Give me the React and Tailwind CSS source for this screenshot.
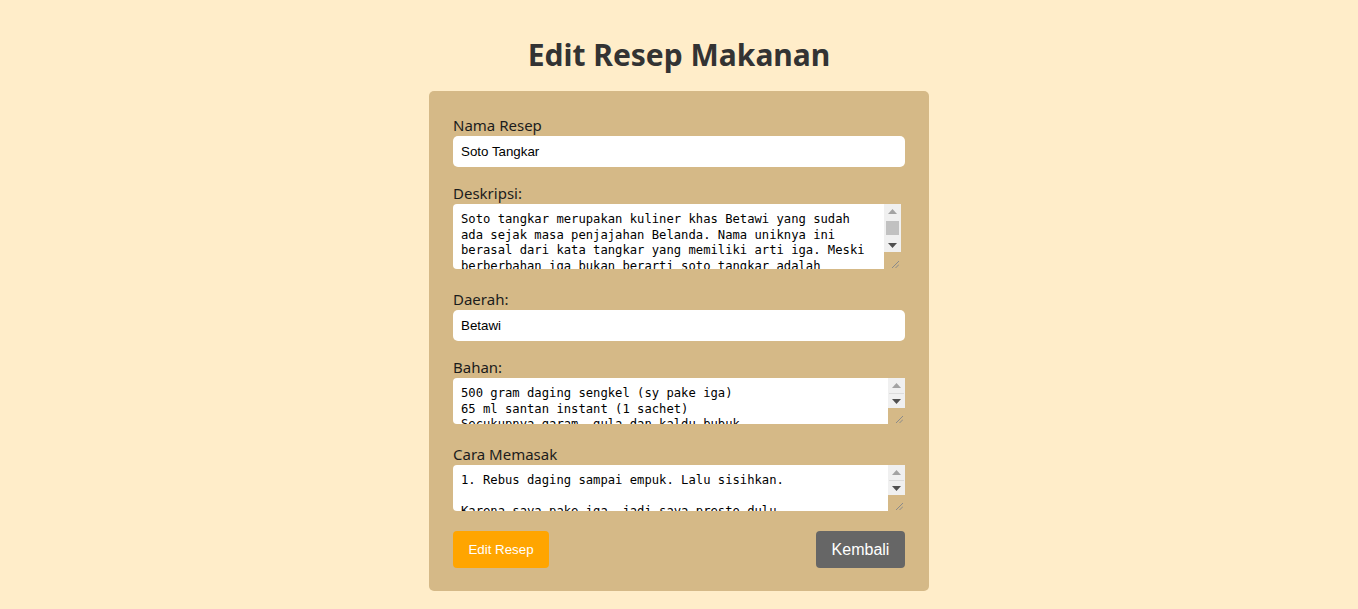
const deskripsi =
    "Soto tangkar merupakan kuliner khas Betawi yang sudah ada sejak masa penjajahan Belanda. Nama uniknya ini berasal dari kata tangkar yang memiliki arti iga. Meski berberbahan iga bukan berarti soto tangkar adalah makanan yang mahal, karena soto tangkar memiliki kuah santan yang gurih dan kaya rempah."

const bahan =
    "500 gram daging sengkel (sy pake iga)\n65 ml santan instant (1 sachet)\nSecukupnya garam, gula dan kaldu bubuk\n1 liter air\n2 batang serai, memarkan"

const caraMemasak =
    "1. Rebus daging sampai empuk. Lalu sisihkan.\n\nKarena saya pake iga, jadi saya presto dulu.\n\n2. Tumis bumbu halus hingga harum."

const Grip = () => (
    <svg width="8" height="8" viewBox="0 0 8 8" className="absolute bottom-[1px] right-[2px]">
        <line x1="1" y1="8" x2="8" y2="1" stroke="#8a8a8a" strokeWidth="1" />
        <line x1="4.5" y1="8" x2="8" y2="4.5" stroke="#8a8a8a" strokeWidth="1" />
    </svg>
)

const ArrowUp = ({ color }) => (
    <svg width="9" height="5" viewBox="0 0 9 5">
        <polygon points="0,5 9,5 4.5,0" fill={color} />
    </svg>
)

const ArrowDown = ({ color }) => (
    <svg width="9" height="5" viewBox="0 0 9 5">
        <polygon points="0,0 9,0 4.5,5" fill={color} />
    </svg>
)

const FakeTextarea = ({ value, widthClass, heightClass, barHeightClass, thumb }) => (
    <div className={`flex ${widthClass} ${heightClass}`}>
        <textarea
            defaultValue={value}
            spellCheck={false}
            className="flex-1 h-full bg-white rounded-l-[4px] px-2 pt-[8px] pb-0 text-black text-[12.2px] leading-[15.6px] resize-none overflow-hidden outline-none"
            style={{ fontFamily: '"DejaVu Sans Mono", "Liberation Mono", monospace' }}
        />
        <div className="w-[17px] h-full flex flex-col">
            <div className={`${barHeightClass} bg-[#f0f0f0] flex flex-col items-center`}>
                <div className="h-[14px] flex items-center justify-center">
                    <ArrowUp color="#a3a3a3" />
                </div>
                {thumb ? (
                    <div className="flex-1 w-full px-[2px] pt-[3px] flex flex-col">
                        <div className="h-[14px] bg-[#c1c1c1]" />
                    </div>
                ) : (
                    <div className="flex-1 w-full flex items-center px-[1px]">
                        <div className="h-px w-full bg-[#dcdcdc]" />
                    </div>
                )}
                <div className="h-[14px] flex items-center justify-center">
                    <ArrowDown color="#505050" />
                </div>
            </div>
            <div className="relative flex-1">
                <Grip />
            </div>
        </div>
    </div>
)

const Label = ({ children }) => (
    <label className="block text-[15px] leading-[21px] text-[#1c1c1c]">
        {children}
    </label>
)

const inputClass =
    "block w-full h-[31px] bg-white rounded-[5px] px-2 text-[13.33px] text-black outline-none"

export default function App() {
    return (
        <div
            className="min-h-screen bg-[#ffedc9] pt-[35px]"
            style={{ fontFamily: '"Noto Sans", "Open Sans", sans-serif' }}
        >
            <h1 className="text-center text-[30px] leading-[40px] font-bold text-[#333333] mb-4">
                Edit Resep Makanan
            </h1>

            <div className="mx-auto w-[500px] bg-[#d5b987] rounded-[5px] px-6 pt-6 pb-[23px]">
                <form onSubmit={(e) => e.preventDefault()}>
                    <Label>Nama Resep</Label>
                    <input
                        type="text"
                        defaultValue="Soto Tangkar"
                        className={inputClass}
                        style={{ fontFamily: '"Liberation Sans", Arial, sans-serif' }}
                    />

                    <div className="mt-4">
                        <Label>Deskripsi:</Label>
                        <FakeTextarea
                            value={deskripsi}
                            widthClass="w-[448px]"
                            heightClass="h-[65px]"
                            barHeightClass="h-[48px]"
                            thumb
                        />
                    </div>

                    <div className="mt-5">
                        <Label>Daerah:</Label>
                        <input
                            type="text"
                            defaultValue="Betawi"
                            className={inputClass}
                            style={{ fontFamily: '"Liberation Sans", Arial, sans-serif' }}
                        />
                    </div>

                    <div className="mt-4">
                        <Label>Bahan:</Label>
                        <FakeTextarea
                            value={bahan}
                            widthClass="w-[452px]"
                            heightClass="h-[46px]"
                            barHeightClass="h-[30px]"
                        />
                    </div>

                    <div className="mt-5">
                        <Label>Cara Memasak</Label>
                        <FakeTextarea
                            value={caraMemasak}
                            widthClass="w-[452px]"
                            heightClass="h-[46px]"
                            barHeightClass="h-[30px]"
                        />
                    </div>

                    <div
                        className="mt-5 flex justify-between"
                        style={{ fontFamily: '"Liberation Sans", Arial, sans-serif' }}
                    >
                        <button
                            type="submit"
                            className="h-[37px] w-[96px] rounded-[4px] bg-[#ffa500] text-white text-[13.33px]"
                        >
                            Edit Resep
                        </button>
                        <button
                            type="button"
                            className="h-[37px] w-[89px] rounded-[4px] bg-[#666666] text-white text-[16px]"
                        >
                            Kembali
                        </button>
                    </div>
                </form>
            </div>
        </div>
    )
}
